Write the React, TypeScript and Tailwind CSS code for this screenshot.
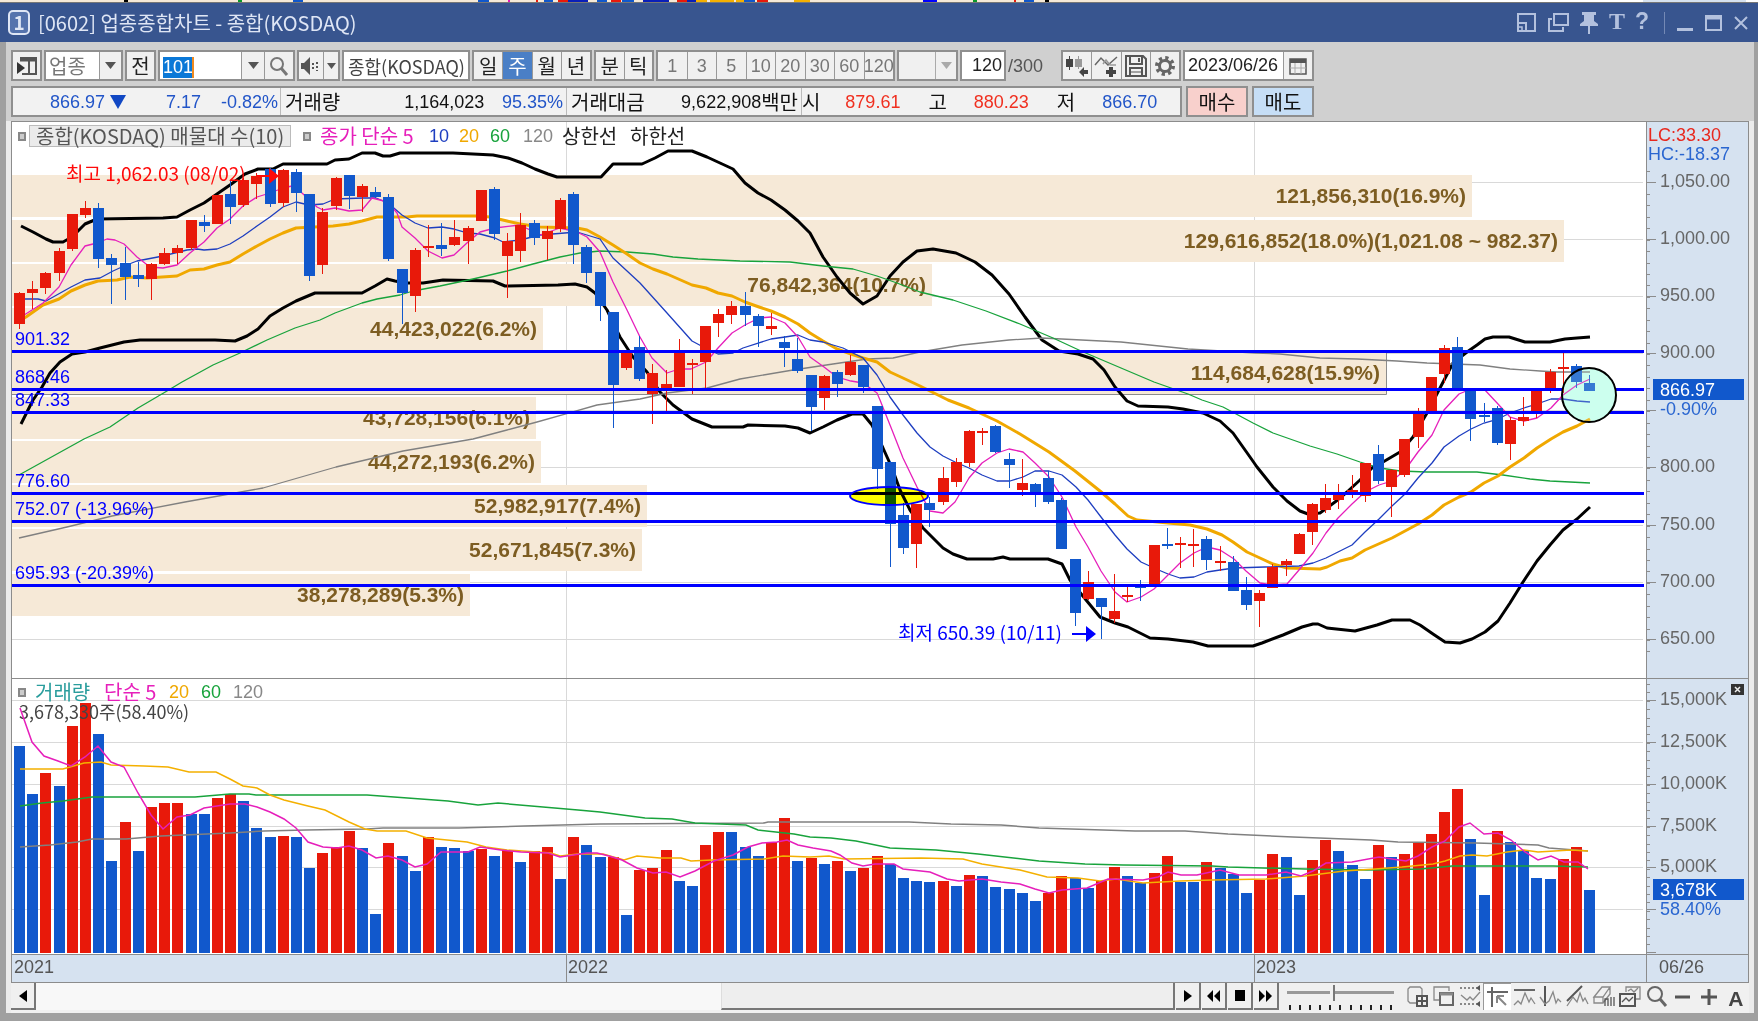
// src/App.tsx
import React, { useState } from 'react';

const UP = '#e8190a';
const DOWN = '#1158cc';
const STEP = 13.194; // distance between two weekly bars

// [rising, body top, body bottom, high, low]
const candles: [number, number, number, number, number][] = [
  [1, 171, 202, 170, 207], [1, 167, 171, 159, 187], [1, 151, 166, 150, 172], [1, 129, 151, 126, 159],
  [1, 92, 127, 92, 129], [1, 86, 93, 79, 96], [0, 86, 137, 81, 146], [0, 136, 143, 132, 182],
  [0, 141, 155, 125, 178], [0, 153, 157, 140, 165], [1, 142, 157, 141, 178], [1, 131, 142, 126, 143],
  [1, 126, 131, 123, 142], [1, 98, 126, 98, 128], [0, 100, 104, 93, 110], [1, 73, 102, 73, 102],
  [0, 72, 85, 59, 102], [1, 58, 83, 56, 85], [1, 54, 62, 51, 77], [0, 47, 82, 46, 85],
  [1, 48, 81, 47, 85], [0, 50, 71, 47, 90], [0, 72, 154, 72, 159], [1, 90, 143, 86, 152],
  [1, 56, 84, 55, 88], [0, 53, 74, 53, 87], [1, 64, 75, 62, 90], [0, 70, 75, 65, 76],
  [0, 75, 137, 72, 139], [0, 147, 171, 147, 202], [1, 128, 174, 126, 190], [1, 124, 126, 103, 135],
  [0, 123, 127, 101, 134], [1, 115, 123, 98, 124], [1, 106, 119, 104, 142], [1, 68, 99, 68, 99],
  [0, 67, 112, 65, 118], [1, 119, 134, 111, 176], [1, 103, 129, 91, 140], [0, 101, 116, 98, 123],
  [1, 109, 117, 104, 138], [1, 78, 107, 76, 110], [0, 72, 123, 70, 142], [0, 125, 151, 123, 161],
  [0, 150, 184, 150, 199], [0, 190, 263, 190, 306], [1, 230, 246, 228, 248], [0, 225, 257, 214, 259],
  [1, 251, 272, 242, 302], [1, 262, 266, 248, 289], [1, 230, 265, 217, 265], [1, 241, 243, 237, 272],
  [1, 204, 240, 204, 269], [1, 192, 201, 187, 215], [1, 184, 193, 179, 202], [0, 184, 193, 170, 204],
  [0, 194, 204, 192, 225], [1, 204, 207, 191, 213], [0, 220, 226, 214, 245], [0, 237, 249, 216, 251],
  [0, 253, 285, 253, 309], [1, 254, 276, 253, 288], [0, 250, 262, 248, 275], [1, 240, 253, 233, 254],
  [0, 243, 265, 243, 271], [0, 284, 347, 284, 367], [0, 340, 402, 339, 445], [0, 393, 426, 381, 432],
  [1, 382, 422, 382, 446], [0, 381, 388, 375, 405], [1, 356, 380, 345, 383], [1, 340, 360, 336, 365],
  [1, 309, 341, 308, 345], [1, 309, 311, 306, 323], [0, 304, 330, 303, 331], [0, 337, 343, 331, 366],
  [1, 361, 368, 337, 374], [0, 362, 371, 361, 385], [0, 356, 380, 349, 382], [0, 378, 427, 376, 427],
  [0, 437, 491, 437, 504], [1, 460, 477, 449, 478], [0, 476, 485, 476, 517], [1, 489, 497, 452, 501],
  [1, 473, 475, 464, 480], [0, 464, 466, 458, 479], [1, 423, 462, 423, 464], [0, 422, 424, 406, 427],
  [1, 421, 423, 415, 446], [1, 422, 424, 407, 445], [0, 417, 438, 414, 448], [1, 439, 441, 424, 449],
  [0, 440, 469, 434, 469], [0, 468, 483, 455, 488], [1, 471, 479, 468, 505], [1, 445, 466, 442, 466],
  [1, 439, 443, 437, 454], [1, 412, 432, 411, 432], [1, 382, 410, 381, 423], [1, 376, 388, 362, 391],
  [1, 373, 378, 362, 387], [1, 368, 370, 353, 376], [1, 341, 374, 341, 380], [0, 332, 359, 323, 362],
  [1, 348, 365, 347, 395], [1, 317, 353, 317, 355], [1, 291, 315, 286, 326], [1, 255, 290, 255, 290],
  [1, 226, 252, 223, 261], [0, 225, 266, 215, 266], [0, 267, 297, 267, 319], [0, 293, 295, 281, 300],
  [0, 286, 321, 284, 323], [1, 298, 322, 295, 338], [1, 295, 299, 275, 304], [1, 267, 289, 267, 296],
  [1, 250, 266, 247, 271], [1, 245, 247, 231, 271], [0, 244, 260, 242, 266], [0, 261, 269, 253, 269],
];

// bar heights, negative for a falling week
const volumes = [
  -207, -159, 180, -167, 227, 250, -219, -92, 131, -102, 146, 150, 150, -139, -139, 155, 159, -152, -125, -116,
  117, -116, -85, 100, 106, 122, -105, -39, 110, -97, -82, 116, -106, -105, -102, 104, -97, 103, -91, 102,
  106, -74, 116, -108, -96, 96, -38, 83, 85, 103, -72, -67, 108, 121, -121, -106, -97, 111, 135, -92,
  95, -89, 92, -82, 85, 97, -89, -75, -72, -71, 72, -67, 78, -77, -66, -64, -60, -52, 60, 77,
  -75, -65, 72, 86, -77, -70, 80, 97, -71, -71, 91, -85, -79, -60, 73, 99, -96, -58, 93, 113,
  -102, -88, -74, 108, -96, 99, 110, 119, 141, 164, -114, -58, 122, -111, -103, -75, -74, 94, 106, -63,
];

const upperBand =
  '9,104 21,110 34,117 41,120 51,120 60,115 73,102 85,97 151,96 165,95 178,88 192,81 205,72 218,63 233,52 246,47 261,47 271,42 315,42 323,38 337,37 350,31 363,31 371,34 378,34 388,31 441,31 481,33 496,36 510,41 523,47 536,52 545,55 589,55 601,42 630,42 643,36 656,29 680,29 695,35 708,41 721,47 733,61 746,71 759,78 773,88 786,99 798,111 811,135 825,155 838,171 851,182 865,174 878,154 891,140 905,129 921,127 944,131 963,140 980,153 997,172 1013,195 1030,218 1047,229 1066,232 1081,237 1092,248 1103,265 1115,279 1126,284 1156,285 1171,287 1191,291 1208,299 1221,311 1238,335 1245,345 1261,365 1275,379 1288,389 1296,392 1308,391 1323,380 1335,370 1348,358 1361,345 1371,340 1388,330 1401,315 1415,291 1428,266 1441,241 1455,230 1465,223 1473,217 1481,215 1497,215 1513,220 1538,220 1553,217 1565,216 1578,215';
const lowerBand =
  '9,302 15,290 21,278 30,265 38,251 48,240 60,232 73,230 88,226 112,220 128,218 203,218 223,219 235,214 246,207 258,194 271,186 284,179 303,171 350,171 363,164 375,157 383,159 393,161 411,161 431,158 481,159 493,164 546,163 563,162 575,165 583,171 595,188 608,215 621,235 635,250 648,270 661,283 680,297 700,305 731,305 736,303 773,304 786,306 798,311 811,305 825,298 840,292 851,292 860,303 871,326 880,346 888,368 898,388 911,406 931,426 941,432 955,437 981,437 991,435 998,437 1036,437 1050,442 1058,458 1070,473 1088,495 1103,501 1116,505 1138,516 1156,517 1181,520 1196,524 1241,524 1250,521 1271,513 1290,505 1301,502 1306,502 1315,506 1343,509 1365,503 1380,498 1398,498 1408,503 1421,512 1433,520 1448,521 1460,517 1473,510 1486,499 1498,481 1511,460 1525,439 1538,423 1551,408 1565,397 1578,385';
const ma5 =
  '9,195 31,181 47,165 59,143 73,124 85,121 95,117 103,118 112,122 125,135 138,145 151,146 165,143 178,131 192,120 205,106 218,97 231,84 245,75 258,71 271,66 280,64 290,71 305,85 311,88 323,86 337,89 350,88 360,76 376,80 385,91 390,105 403,116 416,129 430,136 442,133 456,120 468,110 483,106 508,103 528,113 548,106 565,110 575,115 588,130 601,160 615,188 628,215 640,236 655,251 667,247 679,247 694,240 706,226 720,211 733,203 747,196 759,195 773,201 786,215 798,235 812,245 825,255 839,259 851,261 865,271 868,278 880,308 891,336 905,365 918,389 931,391 943,380 957,356 970,341 985,331 997,327 1011,330 1023,341 1037,355 1050,375 1064,405 1076,425 1089,449 1103,470 1115,480 1129,475 1142,467 1156,453 1168,441 1182,431 1195,425 1208,428 1222,437 1234,449 1248,461 1260,463 1275,462 1287,448 1301,431 1314,411 1326,396 1340,382 1353,370 1367,363 1380,359 1393,348 1406,330 1420,313 1432,288 1447,272 1459,267 1472,267 1486,282 1498,295 1512,299 1525,296 1539,286 1551,273 1565,263 1578,257';
const ma10 =
  '13,177 26,177 34,179 59,165 73,158 88,156 101,149 112,144 125,139 151,134 175,128 185,127 192,128 205,127 218,122 231,114 245,104 258,95 271,85 284,80 297,83 311,82 323,77 351,76 364,76 376,81 390,93 403,101 416,106 430,105 442,107 456,111 468,112 483,116 491,120 508,118 528,113 565,110 588,117 601,136 628,161 655,191 680,219 695,227 706,232 721,231 731,226 759,217 773,215 786,213 798,218 811,220 831,226 851,236 865,253 878,275 891,293 905,311 918,325 931,334 943,340 957,346 970,353 985,359 998,359 1011,355 1023,349 1037,349 1050,353 1064,365 1076,378 1089,395 1103,413 1115,427 1129,440 1142,446 1156,452 1168,456 1182,455 1195,450 1208,448 1222,446 1253,445 1287,444 1301,441 1314,436 1326,430 1340,423 1353,410 1367,397 1380,384 1393,372 1406,356 1420,341 1432,325 1447,314 1459,307 1472,301 1486,297 1498,291 1512,286 1525,282 1539,277 1551,277 1565,279 1578,280';
const ma20 =
  '9,198 14,195 31,183 47,177 59,169 73,163 86,159 105,158 118,155 135,156 165,154 178,148 192,147 205,143 218,140 231,132 245,124 258,117 271,111 284,106 321,104 337,102 350,99 365,95 395,95 405,94 465,94 478,95 495,99 508,102 528,105 565,106 575,108 588,115 601,123 615,132 628,141 641,147 655,152 680,163 694,166 706,171 720,174 733,180 747,185 759,189 773,195 786,202 798,211 811,219 825,227 839,232 851,236 865,240 878,250 891,256 908,264 936,278 957,286 985,299 1008,312 1037,330 1063,349 1088,369 1103,382 1116,394 1125,398 1156,401 1178,403 1195,407 1210,413 1221,420 1235,430 1248,436 1261,442 1275,446 1308,447 1315,445 1328,439 1340,436 1353,428 1380,416 1406,402 1420,393 1432,383 1447,375 1459,370 1472,361 1486,354 1498,345 1512,336 1525,326 1539,317 1551,310 1565,304 1578,297';
const ma60 =
  '7,353 72,317 98,305 126,286 155,269 170,260 201,243 228,231 255,218 283,206 308,198 323,191 350,181 365,177 388,173 401,169 428,164 461,157 495,149 521,142 548,135 568,131 588,129 615,130 641,132 661,135 686,137 728,139 778,140 811,144 841,147 865,154 885,161 908,170 941,178 974,189 1008,202 1041,216 1069,229 1109,246 1142,260 1176,272 1190,278 1211,285 1241,301 1261,311 1298,324 1325,332 1348,340 1368,346 1388,349 1415,350 1465,350 1491,353 1518,357 1538,359 1558,360 1578,361';
const ma120 =
  '7,416 55,405 100,394 173,380 251,366 324,345 391,329 461,317 495,308 525,300 553,292 585,283 628,277 655,271 695,266 728,257 781,248 821,242 855,237 881,236 908,230 950,223 997,218 1030,216 1109,220 1176,227 1243,231 1268,232 1308,236 1345,237 1385,239 1415,241 1468,243 1498,247 1528,249 1545,250 1578,250';

const vol5 =
  '8,29 20,63 32,77 46,82 59,87 73,78 86,67 99,83 112,88 126,114 139,136 151,150 165,138 178,136 192,129 205,127 218,125 233,125 245,128 258,133 272,140 284,149 296,163 311,168 325,169 337,167 350,171 364,179 376,177 390,181 403,188 415,185 429,173 456,173 468,168 489,171 509,173 536,174 548,178 575,174 585,174 597,177 610,181 625,189 641,194 654,193 668,198 683,192 702,182 721,176 736,168 750,164 765,163 775,161 786,166 801,169 819,172 828,176 840,184 851,187 863,185 882,185 891,190 918,193 935,200 947,202 970,200 989,203 1008,205 1023,210 1037,214 1050,211 1075,209 1096,200 1131,201 1146,198 1156,193 1169,196 1185,196 1208,191 1227,196 1254,196 1274,193 1289,197 1301,192 1314,184 1340,183 1367,178 1380,180 1394,182 1406,177 1420,168 1433,162 1447,148 1458,144 1472,155 1486,154 1499,161 1513,173 1526,181 1539,177 1552,183 1566,183 1576,190';
const vol20 =
  '8,90 51,90 72,84 89,83 99,86 132,87 156,88 177,93 204,93 218,100 231,107 245,109 258,116 272,121 296,127 313,131 337,143 353,150 365,152 394,152 415,159 455,163 474,168 495,171 539,174 548,177 566,175 591,175 612,181 625,177 648,179 669,179 679,182 700,181 752,180 771,177 798,178 817,177 832,180 909,179 951,180 970,185 1008,191 1035,198 1066,199 1088,202 1104,200 1131,204 1168,202 1200,201 1254,200 1293,197 1332,192 1363,190 1390,188 1421,185 1433,182 1448,177 1460,176 1475,177 1495,173 1512,171 1526,173 1559,171 1576,172';
const vol60 =
  '8,127 30,124 51,122 80,118 183,118 218,115 237,115 244,116 355,116 382,118 409,120 436,122 466,126 486,124 531,128 566,131 588,133 633,139 660,140 683,144 734,146 746,151 782,155 798,158 819,159 844,162 878,169 924,171 966,175 1027,182 1073,185 1111,186 1200,187 1216,188 1293,190 1355,191 1409,190 1440,187 1541,187 1576,188';
const vol120 =
  '8,168 38,166 65,163 80,160 114,160 149,157 218,154 252,152 294,151 355,150 371,149 447,149 512,147 588,145 752,144 756,143 897,143 939,145 989,146 1027,149 1123,152 1173,152 1216,155 1281,158 1359,161 1386,163 1464,164 1526,166 1537,169 1576,172';

const profile: [number, number, string][] = [
  [53, 1460, '121,856,310(16.9%)'],
  [98, 1552, '129,616,852(18.0%)(1,021.08 ~ 982.37)'],
  [142, 920, '76,842,364(10.7%)'],
  [186, 531, '44,423,022(6.2%)'],
  [230, 1374, '114,684,628(15.9%)'],
  [275, 524, '43,728,156(6.1%)'],
  [319, 529, '44,272,193(6.2%)'],
  [363, 635, '52,982,917(7.4%)'],
  [407, 630, '52,671,845(7.3%)'],
  [452, 458, '38,278,289(5.3%)'],
];

const levels: [number, string][] = [
  [229, '901.32'],
  [267, '868.46'],
  [290, '847.33'],
  [371, '776.60'],
  [399, '752.07 (-13.96%)'],
  [463, '695.93 (-20.39%)'],
];

const priceTicks: [number, string][] = [
  [60, '1,050.00'], [117, '1,000.00'], [174, '950.00'], [231, '900.00'], [288, ''],
  [345, '800.00'], [403, '750.00'], [460, '700.00'], [517, '650.00'],
];

const volumeTicks: [number, string][] = [
  [21, '15,000K'], [63, '12,500K'], [105, '10,000K'], [147, '7,500K'], [188, '5,000K'], [230, ''], [273, ''],
];

// window edge of the chart lying behind this one: [x, width, fill]
const backdrop: [number, number, string][] = [
  [124, 4, '#000'], [238, 4, '#0a9a2a'], [293, 10, DOWN], [478, 11, DOWN], [508, 2, '#e619b8'], [536, 2, UP],
  [544, 9, DOWN], [558, 10, UP], [568, 20, '#0a1fb8'], [597, 10, DOWN], [611, 10, UP], [622, 12, DOWN],
  [643, 26, '#0a1fb8'], [677, 10, UP], [687, 9, '#0a1fb8'], [696, 11, '#f4b000'], [710, 24, '#f4b000'],
  [736, 8, '#f4b000'], [744, 11, DOWN], [757, 11, UP], [794, 16, '#f4b000'], [923, 14, '#00f'],
  [973, 4, '#0a9a2a'], [1014, 2, UP], [1024, 10, DOWN], [1045, 4, '#000'],
];

const Candles: React.FC = () => (
  <g shapeRendering="crispEdges">
    {candles.map(([up, top, bottom, high, low], i) => {
      const x = Math.round(2 + i * STEP);
      return (
        <g key={i} fill={up ? UP : DOWN}>
          <rect x={x + 5} y={high} width="1" height={low - high} />
          <rect x={x} y={top} width="11" height={Math.max(bottom - top, 2)} />
        </g>
      );
    })}
  </g>
);

const PriceChart: React.FC = () => (
  <svg viewBox="0 0 1634 556" preserveAspectRatio="none" className="block h-[556px] w-full bg-white">
    <defs>
      <clipPath id="spot">
        <circle cx="1577" cy="273" r="27" />
      </clipPath>
    </defs>
    <g fill="#d9d9d9">
      {priceTicks.map(([y]) => (
        <rect key={y} x="0" y={y} width="1631" height="1" />
      ))}
      <rect x="554" y="0" width="1" height="556" />
      <rect x="1242" y="0" width="1" height="556" />
    </g>
    {profile.map(([y, w]) => (
      <rect key={y} x="0" y={y} width={w} height="42" fill="#f6e9d7" />
    ))}
    <path d="M0 272.500H1374.500V229" fill="none" stroke="#8c8c8c" />
    <g fontWeight="bold" className="font-[family-name:'Liberation_Sans'] text-[21px]" fill="#7d5d22" textAnchor="end">
      {profile.map(([y, w, label]) => (
        <text key={y} x={w - 6} y={y + 28}>{label}</text>
      ))}
    </g>
    <g id="series" fill="none" strokeLinejoin="round">
      <polyline points={upperBand} stroke="#000" strokeWidth="3" />
      <polyline points={lowerBand} stroke="#000" strokeWidth="3" />
      <polyline points={ma120} stroke="#808080" strokeWidth="1.300" />
      <polyline points={ma60} stroke="#18a33c" strokeWidth="1.300" />
      <polyline points={ma20} stroke="#f0a800" strokeWidth="3" />
      <polyline points={ma10} stroke="#1e3ec0" strokeWidth="1.300" />
      <polyline points={ma5} stroke="#e61fbb" strokeWidth="1.300" />
      <Candles />
    </g>
    {levels.map(([y, label]) => (
      <g key={y} fill="#0000ff">
        <rect x="0" y={y - 1} width="1632" height="3" />
        <text x="3" y={y - 6} className="font-[family-name:'Liberation_Sans'] text-[18px]">{label}</text>
      </g>
    ))}
    <g fill="#ff0a0a">
      <text x="54" y="59" className="text-[19px]">최고 1,062.03 (08/02)</text>
      <path d="M245 53h12v-7l10 8-10 8v-7h-12z" />
    </g>
    <g fill="#0000ff">
      <text x="886" y="518" className="text-[19px]">최저 650.39 (10/11)</text>
      <path d="M1060 511h14v-7l10 8-10 8v-7h-14z" />
    </g>
    <ellipse cx="877" cy="374" rx="39" ry="9" fill="#ffff00" className="mix-blend-multiply" />
    <ellipse cx="877" cy="374" rx="39" ry="9" fill="none" stroke="#0000ff" strokeWidth="2" />
    <circle cx="1577" cy="273" r="27" fill="#ccffee" />
    <use href="#series" clipPath="url(#spot)" opacity="0.8" />
    <circle cx="1577" cy="273" r="27" fill="none" stroke="#000" strokeWidth="2" />
  </svg>
);

const axis = "block w-[101px] bg-[#d6e2f0] font-[family-name:'Liberation_Sans'] text-[18px]";

const PriceAxis: React.FC = () => (
  <svg className={`${axis} h-[556px]`}>
    {Array.from({ length: 43 }, (_, i) => 49 + Math.round(i * 11.44)).map((y) => (
      <rect key={y} x="0" y={y} width="3" height="1" fill="#8c8c8c" />
    ))}
    {priceTicks.map(([y, label]) => (
      <g key={y}>
        <rect x="0" y={y} width="9" height="1" fill="#8c8c8c" />
        <text x="13" y={y + 5} fill="#666">{label}</text>
      </g>
    ))}
    <text x="1" y="19" fill="#e8281e">LC:33.30</text>
    <text x="1" y="38" fill="#2a66d0">HC:-18.37</text>
    <rect x="6" y="257" width="91" height="21" fill={DOWN} />
    <text x="13" y="274" fill="#fff">866.97</text>
    <text x="13" y="293" fill="#2a66d0">-0.90%</text>
  </svg>
);

const VolumeChart: React.FC = () => (
  <svg viewBox="0 0 1634 275" preserveAspectRatio="none" className="block h-[275px] w-full bg-white">
    <g fill="#d9d9d9">
      {volumeTicks.slice(0, 6).map(([y]) => (
        <rect key={y} x="0" y={y} width="1631" height="1" />
      ))}
      <rect x="554" y="0" width="1" height="275" />
      <rect x="1242" y="0" width="1" height="275" />
    </g>
    {volumes.map((v, i) => (
      <rect
        key={i}
        x={Math.round(2 + i * STEP)}
        y={274 - Math.abs(v)}
        width="11"
        height={Math.abs(v)}
        fill={v > 0 ? UP : DOWN}
        shapeRendering="crispEdges"
      />
    ))}
    <text x="7" y="40" fill="#444" className="text-[18px]">3,678,330주(58.40%)</text>
    <g fill="none" strokeWidth="1.500">
      <polyline points={vol120} stroke="#808080" />
      <polyline points={vol60} stroke="#18a33c" />
      <polyline points={vol20} stroke="#f4b000" />
      <polyline points={vol5} stroke="#e61fbb" />
    </g>
  </svg>
);

const VolumeAxis: React.FC = () => (
  <svg className={`${axis} h-[275px]`}>
    {Array.from({ length: 32 }, (_, i) => 5 + Math.round(i * 8.4)).map((y) => (
      <rect key={y} x="0" y={y} width="3" height="1" fill="#8c8c8c" />
    ))}
    {volumeTicks.map(([y, label]) => (
      <g key={y}>
        <rect x="0" y={y} width="9" height="1" fill="#8c8c8c" />
        <text x="13" y={y + 5} fill="#666">{label}</text>
      </g>
    ))}
    <rect x="6" y="200" width="91" height="21" fill={DOWN} />
    <text x="13" y="217" fill="#fff">3,678K</text>
    <text x="13" y="236" fill="#2a66d0">58.40%</text>
    <rect x="84" y="5" width="13" height="11" fill="#333" />
    <path d="M88 8l5 5M93 8l-5 5" stroke="#eee" strokeWidth="1.500" />
  </svg>
);

const Marker: React.FC = () => <span className="h-[9px] w-2 border-2 border-[#888] bg-[#ccc]" />;

const box = 'flex h-[31px] items-center border-2 border-[#8f8f8f]';
const tool = 'flex h-full items-center justify-center bg-[#f0f0f0]';
const latin = "font-[family-name:'Liberation_Sans'] text-[18px]";
const num = `${latin} text-right`;

const Caret: React.FC<{ color?: string }> = ({ color = '#555' }) => (
  <svg width="11" height="7" viewBox="0 0 11 7"><path d="M0 0h11L5.500 7z" fill={color} /></svg>
);

const TitleBar: React.FC = () => (
  <header className="flex h-[39px] items-center bg-[#38558f] pl-2 pr-[10px] text-[#dfe6f5]">
    <span className="flex h-[25px] w-[22px] items-center justify-center rounded-[5px] border-2 border-[#dfe6f5] bg-[#5573ad] text-[19px] font-bold">1</span>
    <h1 className="ml-2 text-[20px] leading-6">[0602] 업종종합차트 - 종합(KOSDAQ)</h1>
    <div className="ml-auto flex items-center text-[#b3c1de]">
      <button aria-label="크기 조절" className="mr-3">
        <svg width="19" height="20" fill="none" stroke="currentColor" strokeWidth="2"><path d="M1 1h17v17H1zM1 10h8v8" /><path d="M1 14h4v4" strokeWidth="1.500" /></svg>
      </button>
      <button aria-label="창 복사" className="mr-[11px]">
        <svg width="21" height="20" fill="none" stroke="currentColor" strokeWidth="2"><path d="M6 1h14v11H6z" /><path d="M4 6H1v12h14v-4" /></svg>
      </button>
      <button aria-label="고정" className="mr-[11px]">
        <svg width="18" height="22" fill="currentColor"><path d="M2 0h14v3h-2v6l4 3v2H0v-2l4-3V3H2zM8 14h2v8H8z" /></svg>
      </button>
      <button aria-label="글꼴" className="mr-3 w-[14px] pb-1 font-[family-name:'Liberation_Serif'] text-[24px] font-bold leading-6">T</button>
      <button aria-label="도움말" className="mr-[15px] w-[14px] pb-1 font-[family-name:'Liberation_Sans'] text-[23px] font-bold leading-6">?</button>
      <span className="mr-3 h-[22px] w-px bg-[#7489b5]" />
      <button aria-label="최소화" className="mr-3">
        <svg width="16" height="20"><path d="M0 15h16v3H0z" fill="currentColor" /></svg>
      </button>
      <button aria-label="최대화" className="mr-3">
        <svg width="17" height="18" fill="none" stroke="currentColor" strokeWidth="2"><path d="M1 2h15v14H1z" /><path d="M1 4h15" strokeWidth="3" /></svg>
      </button>
      <button aria-label="닫기">
        <svg width="14" height="14" stroke="currentColor" strokeWidth="2"><path d="M1 1l12 12M13 1L1 13" /></svg>
      </button>
    </div>
  </header>
);

const Toolbar: React.FC = () => {
  const [period, setPeriod] = useState('주');
  return (
    <div className="flex h-[31px] gap-[2px] text-[20px] leading-6 text-[#222]">
      <button aria-label="메뉴" className={`${box} w-[31px] justify-center bg-[#f0f0f0]`}>
        <svg width="20" height="20" fill="none" stroke="#555" strokeWidth="2"><path d="M3 2h16v16H5" /><path d="M3 4h16" strokeWidth="3" /><path d="M12 5v13" /><path d="M0 6v12l8-6z" fill="#333" stroke="none" /></svg>
      </button>
      <div className={`${box} relative w-[79px] bg-white`}>
        <select aria-label="구분" className="h-full w-full appearance-none pl-[3px] text-[#777]"><option>업종</option></select>
        <span className={`${tool} pointer-events-none absolute right-0 top-0 w-[22px] border-l border-[#999]`}><Caret /></span>
      </div>
      <button className={`${box} w-[31px] justify-center bg-[#f0f0f0]`}>전</button>
      <div className={`${box} w-[137px] bg-white`}>
        <div className="flex-1 pl-[3px]">
          <input aria-label="종목코드" defaultValue="101" className={`${latin} h-[21px] w-[31px] border-r-2 border-[#f08a20] bg-[#0a78d7] text-white outline-none`} />
        </div>
        <button aria-label="목록" className={`${tool} w-[23px] border-l border-[#999]`}><Caret /></button>
        <button aria-label="검색" className={`${tool} w-[29px] border-l border-[#999]`}>
          <svg width="20" height="20" fill="none" stroke="#777" strokeWidth="2"><circle cx="8" cy="8" r="6" /><path d="M12 12l6 7" strokeWidth="3" /></svg>
        </button>
      </div>
      <div className={`${box} w-[43px] bg-[#f0f0f0]`}>
        <button aria-label="음성" className="flex h-full flex-1 items-center justify-center">
          <svg width="20" height="18" fill="#555"><path d="M0 6h3l6-6v18l-6-6H0z" /><path d="M11 6h2v2h-2zM11 10h2v2h-2zM15 5h2v2h-2zM15 9h2v2h-2zM15 13h2v1h-2z" /></svg>
        </button>
        <button aria-label="음성 목록" className="flex h-full w-[15px] items-center justify-center border-l border-[#999]">
          <svg width="9" height="6"><path d="M0 0h9L4.500 6z" fill="#555" /></svg>
        </button>
      </div>
      <input aria-label="종목명" readOnly value="종합(KOSDAQ)" className={`${box} w-[128px] bg-white pl-1 text-[18px] text-[#444] outline-none`} />
      <div className={`${box} w-[120px] divide-x divide-[#999] bg-[#f0f0f0]`}>
        {['일', '주', '월', '년'].map((p) => (
          <button key={p} onClick={() => setPeriod(p)} className={`h-full flex-1 ${p === period ? 'bg-[#4a7fc6] text-white' : ''}`}>{p}</button>
        ))}
      </div>
      <div className={`${box} w-[60px] divide-x divide-[#999] bg-[#f0f0f0]`}>
        {['분', '틱'].map((p) => (
          <button key={p} onClick={() => setPeriod(p)} className={`h-full flex-1 ${p === period ? 'bg-[#4a7fc6] text-white' : ''}`}>{p}</button>
        ))}
      </div>
      <div className={`${box} ${latin} w-[239px] divide-x divide-[#999] bg-[#f0f0f0] text-[#777]`}>
        {['1', '3', '5', '10', '20', '30', '60', '120'].map((n) => (
          <button key={n} className="flex h-full w-0 flex-1 items-center justify-center">{n}</button>
        ))}
      </div>
      <div className={`${box} relative w-[61px] bg-[#f0f0f0]`}>
        <select aria-label="주기" disabled className="h-full w-full appearance-none"><option></option></select>
        <span className={`${tool} pointer-events-none absolute right-0 top-0 w-[21px] border-l border-[#aaa]`}><Caret color="#aaa" /></span>
      </div>
      <div className={`${latin} flex items-center`}>
        <input aria-label="표시 개수" defaultValue="120" className={`${box} w-[46px] bg-white pr-[2px] text-right outline-none`} />
        <span className="w-[53px] pl-[2px] text-[#555]">/300</span>
      </div>
      <div className={`${box} w-[120px] divide-x divide-[#999] bg-[#f0f0f0]`}>
        <button aria-label="차트 종류" className="flex h-full flex-1 items-center justify-center">
          <svg width="24" height="24"><path d="M1 5h7v8H1zM4 2h1v14H4z" fill="#444" /><path d="M10 5h7v8h-7zM13 2h1v13h-1z" fill="#999" /><path d="M14 18l5-5v3h4v4h-4v3z" fill="#444" /></svg>
        </button>
        <button aria-label="지표 추가" className="flex h-full flex-1 items-center justify-center">
          <svg width="24" height="24" fill="none" strokeWidth="1.500"><path d="M1 11l6-7 7 7 9-8" stroke="#666" /><path d="M9 10l3-4 4 5 6 0" stroke="#999" /><path d="M17 13v10M12 18h10" stroke="#444" strokeWidth="4" /></svg>
        </button>
        <button aria-label="저장" className="flex h-full flex-1 items-center justify-center">
          <svg width="22" height="22" fill="none" stroke="#555" strokeWidth="2"><path d="M1 1h17l3 3v17H1z" /><path d="M5 1v8h12V1M5 21v-8h12v8" /><path d="M14 3v4" /><path d="M5 17h12" strokeWidth="1" /></svg>
        </button>
        <button aria-label="설정" className="flex h-full flex-1 items-center justify-center">
          <svg width="20" height="20" fill="none" stroke="#666"><circle cx="10" cy="10" r="5.500" strokeWidth="3" /><circle cx="10" cy="10" r="8" strokeWidth="4" strokeDasharray="3.140 3.140" /></svg>
        </button>
      </div>
      <div className={`${box} w-[131px] bg-white`}>
        <input aria-label="날짜" defaultValue="2023/06/26" className={`${latin} h-full min-w-0 flex-1 pl-[3px] outline-none`} />
        <button aria-label="달력" className={`${tool} w-[29px] border-l border-[#999]`}>
          <svg width="18" height="18" fill="none" stroke="#555"><path d="M1 2h16v15H1z" strokeWidth="1.500" /><path d="M1 4h16" strokeWidth="4" /><path d="M1 11h16M6 6v11M12 6v11" stroke="#aaa" /></svg>
        </button>
      </div>
    </div>
  );
};

const QuoteBar: React.FC = () => (
  <div className="mt-[5px] flex h-[31px] gap-1 text-[20px] leading-6 text-[#111]">
    <div className={`${box} w-[1171px] bg-[#f2f2f2]`}>
      <div className="flex h-full w-[268px] items-center border-r border-[#bbb] text-[#2255c8]">
        <span className={`${num} w-[92px]`}>866.97</span>
        <svg width="16" height="16" className="ml-[5px]"><path d="M0 1h16L8 15z" fill="#1148c4" /></svg>
        <span className={`${num} w-[75px]`}>7.17</span>
        <span className={`${num} flex-1 pr-[2px]`}>-0.82%</span>
      </div>
      <div className="flex h-full w-[286px] items-center border-r border-[#bbb] pl-1">
        <span>거래량</span>
        <span className={`${num} w-[144px]`}>1,164,023</span>
        <span className={`${num} flex-1 pr-[3px] text-[#2255c8]`}>95.35%</span>
      </div>
      <div className="flex h-full w-[235px] items-center border-r border-[#bbb] pl-1">
        <span>거래대금</span>
        <span className={`${num} flex-1`}>9,622,908</span>
        <span className="pr-[3px]">백만</span>
      </div>
      <span>시</span>
      <span className={`${num} w-[80px] text-[#f03020]`}>879.61</span>
      <span className="pl-7">고</span>
      <span className={`${num} w-[82px] text-[#f03020]`}>880.23</span>
      <span className="pl-7">저</span>
      <span className={`${num} w-[82px] text-[#2255c8]`}>866.70</span>
    </div>
    <button className={`${box} w-[62px] justify-center bg-[#f8d0cc]`}>매수</button>
    <button className={`${box} w-[62px] justify-center bg-[#c6def6]`}>매도</button>
  </div>
);

const knob = 'flex h-[27px] w-[25px] items-center justify-center border-b-2 border-r-2 border-[#777] bg-[#f0f0f0]';

const drawIcons: [string, React.ReactNode][] = [
  ['창 추가', <><path d="M11 18H4l-2-2V4l2-2h10l2 2v6" /><path d="M11 11h10v10H11zM16 11v10M11 16h10" stroke="#555" strokeWidth="2" /></>],
  ['창 겹치기', <><path d="M7 15H2V2h15v4" /><path d="M8 8h13v12H8z" stroke="#666" strokeWidth="2" /><path d="M8 9h13" strokeWidth="3" /></>],
  ['구간', <><path d="M1 3h17M1 19h17" strokeDasharray="2 2" strokeWidth="2" /><path d="M2 10l6 5 3-3 3 3 7-8" /><path d="M21 0v6l-4-3zM21 16v6l-4-3z" fill="#555" stroke="none" /></>],
  ['십자선', <><path d="M1 6h21M6 1v20" stroke="#666" strokeWidth="2" /><path d="M11 10l9 9M11 10v7M11 10h7" strokeWidth="2" /></>],
  ['수평선', <><path d="M1 5h21" stroke="#666" strokeWidth="2" /><path d="M1 20l4-4 3 3 4-11 4 9 2-4 4 6" /></>],
  ['수직선', <><path d="M6 1v20" stroke="#555" strokeWidth="2" /><path d="M1 12l5 7 4-3 4-9 3 11 2-4 3 3" /></>],
  ['추세선', <><path d="M1 16L16 1" stroke="#555" strokeWidth="2" /><path d="M1 21l6-9 4 5 3-9 3 8 2-3 3 6" /></>],
  ['전체 지우기', <><path d="M2 12L10 2h8l-7 10zM2 12h9v6H2zM11 18l7-9V2" /><path d="M13 21v-7h3v7M19 12v9M22 12v9" stroke="#555" /></>],
  ['그림 저장', <><path d="M8 7V2h14v12h-4" /><path d="M10 6l3-2 3 3 4-4" /><path d="M2 9h15v12H2z" stroke="#555" strokeWidth="2" /><path d="M4 17l4-4 3 3 4-4" stroke="#555" /></>],
  ['돋보기', <><circle cx="10" cy="9" r="7" stroke="#666" strokeWidth="2" /><path d="M15 14l6 7" stroke="#666" strokeWidth="3" /></>],
  ['축소', <path d="M4 12h15" stroke="#555" strokeWidth="3" />],
  ['확대', <path d="M3 12h16M11 4v16" stroke="#555" strokeWidth="3" />],
];

const BottomBar: React.FC = () => (
  <div className="flex h-[30px] items-start bg-[#f0f0f0]">
    <button aria-label="왼쪽으로" className={knob}>
      <svg width="8" height="12"><path d="M8 0v12L0 6z" /></svg>
    </button>
    <div className="flex h-[27px] flex-1 bg-[#f8f8f8]">
      <div className="ml-auto h-full w-[454px] border-b-2 border-l border-r-2 border-[#777] border-l-[#ddd] bg-[#eee]" />
    </div>
    <div className="flex gap-px pl-px">
      <button aria-label="오른쪽으로" className={knob}><svg width="8" height="12"><path d="M0 0v12l8-6z" /></svg></button>
      <button aria-label="뒤로" className={knob}><svg width="13" height="12"><path d="M6 0v12L0 6zM13 0v12L7 6z" /></svg></button>
      <button aria-label="정지" className={knob}><svg width="10" height="11"><path d="M0 0h10v11H0z" /></svg></button>
      <button aria-label="앞으로" className={knob}><svg width="13" height="12"><path d="M0 0v12l6-6zM7 0v12l6-6z" /></svg></button>
    </div>
    <div className="ml-2 mr-[10px] w-[107px]">
      <input
        type="range"
        aria-label="확대 비율"
        defaultValue="42"
        className="mt-[2px] block h-4 w-full appearance-none bg-[linear-gradient(#999,#999)] bg-[length:100%_3px] bg-[position:0_6px] bg-no-repeat [&::-webkit-slider-thumb]:h-4 [&::-webkit-slider-thumb]:w-[5px] [&::-webkit-slider-thumb]:appearance-none [&::-webkit-slider-thumb]:border-r-2 [&::-webkit-slider-thumb]:border-[#777] [&::-webkit-slider-thumb]:bg-[#f0f0f0]"
      />
      <div className="mt-1 flex justify-between px-[2px]">
        {Array.from({ length: 11 }, (_, i) => <span key={i} className="h-[5px] w-[2px] bg-[#222]" />)}
      </div>
    </div>
    <div className="flex w-[345px]">
      {drawIcons.map(([label, shape]) => (
        <button key={label} aria-label={label} className={`flex h-[27px] w-0 flex-1 items-center justify-center ${label === '십자선' ? 'border-l border-t border-[#999] bg-white' : ''}`}>
          <svg width="23" height="23" fill="none" stroke="#888" strokeWidth="1.300">{shape}</svg>
        </button>
      ))}
      <button className="h-[27px] w-0 flex-1 font-[family-name:'Liberation_Sans'] text-[21px] font-bold text-[#444]">A</button>
    </div>
  </div>
);

const App: React.FC = () => (
  <div className="flex min-h-screen flex-col bg-[#a0a0a0] font-[family-name:'Noto_Sans_CJK_KR',sans-serif]">
    <svg viewBox="0 0 1758 3" preserveAspectRatio="none" className="block h-[3px] w-full">
      <rect width="1758" height="3" fill="#fff" />
      <rect width="1450" height="3" fill="#f6e9d7" />
      <rect x="1643" width="103" height="3" fill="#d6e2f0" />
      {backdrop.map(([x, w, fill]) => (
        <rect key={x} x={x} width={w} height="3" fill={fill} />
      ))}
      <rect y="2" width="1758" height="1" fill="#777" />
    </svg>
    <TitleBar />
    <main className="mb-2 ml-[6px] mr-1 flex-1 bg-[#ebebeb]">
      <div className="bg-[#d0d0d0] pb-1 pl-[5px] pt-2">
        <Toolbar />
        <QuoteBar />
      </div>
      <div className="mx-[5px]">
        <div className="border border-[#8c8c8c]">
          <div className="flex border-b border-[#8c8c8c]">
            <div className="relative min-w-0 flex-1">
              <PriceChart />
              <div className="absolute left-[6px] top-[3px] flex h-[22px] items-center whitespace-nowrap text-[20px] leading-[22px]">
                <Marker />
                <span className="ml-[3px] mr-3 h-[22px] w-[262px] border border-[#bbb] bg-[#ebebeb] pl-[6px] leading-5 text-[#555]">종합(KOSDAQ) 매물대 수(10)</span>
                <Marker />
                <span className="ml-[9px] w-[109px] text-[#e61fbb]">종가 단순 5</span>
                <span className={`${latin} w-[30px] text-[#1e3ec0]`}>10</span>
                <span className={`${latin} w-[31px] text-[#f0a800]`}>20</span>
                <span className={`${latin} w-[33px] text-[#18a33c]`}>60</span>
                <span className={`${latin} w-[39px] text-[#888]`}>120</span>
                <span className="w-[68px] text-[#222]">상한선</span>
                <span className="text-[#222]">하한선</span>
              </div>
            </div>
            <div className="border-l border-[#8c8c8c]"><PriceAxis /></div>
          </div>
          <div className="flex border-b border-[#8c8c8c]">
            <div className="relative min-w-0 flex-1">
              <VolumeChart />
              <div className="absolute left-[6px] top-[2px] flex h-[22px] items-center whitespace-nowrap text-[20px] leading-[22px]">
                <Marker />
                <span className="ml-[9px] w-[69px] text-[#2a9d9d]">거래량</span>
                <span className="w-[65px] text-[#e61fbb]">단순 5</span>
                <span className={`${latin} w-8 text-[#f0a800]`}>20</span>
                <span className={`${latin} w-8 text-[#18a33c]`}>60</span>
                <span className={`${latin} text-[#888]`}>120</span>
              </div>
            </div>
            <div className="border-l border-[#8c8c8c]"><VolumeAxis /></div>
          </div>
          <div className={`${latin} flex h-[27px] bg-[#d6e2f0] leading-6 text-[#555]`}>
            <span className="w-[554px] pl-[2px]">2021</span>
            <span className="w-[688px] border-l border-[#8c8c8c] pl-px">2022</span>
            <span className="flex-1 border-l border-[#8c8c8c] pl-px">2023</span>
            <span className="w-[102px] border-l border-[#8c8c8c] pl-3">06/26</span>
          </div>
        </div>
        <BottomBar />
      </div>
    </main>
  </div>
);

export default App;
